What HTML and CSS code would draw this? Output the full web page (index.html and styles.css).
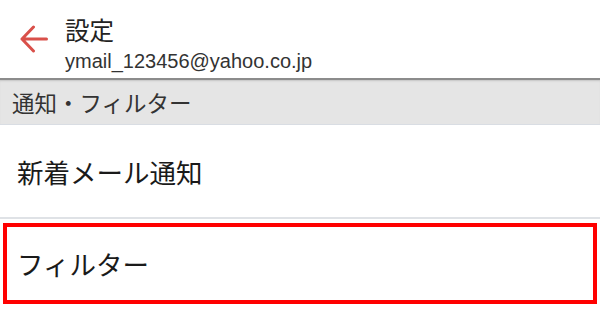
FILE: index.html
```html
<!DOCTYPE html>
<html lang="ja">
<head>
<meta charset="utf-8">
<link rel="stylesheet" href="styles.css">
</head>
<body>
<header class="header">
  <svg class="back" width="28" height="28" viewBox="0 0 28 28" aria-hidden="true">
    <path d="M2 14 H26.5 M13.5 2 L2 14 L13.5 26" fill="none" stroke="#d9504a" stroke-width="3" stroke-linecap="round" stroke-linejoin="round"/>
  </svg>
  <div class="titles">
    <div class="title">設定</div>
    <div class="email">ymail_123456@yahoo.co.jp</div>
  </div>
</header>
<div class="section">通知・フィルター</div>
<div class="row">新着メール通知</div>
<div class="row selected">フィルター</div>
</body>
</html>
```
FILE: styles.css
```css
html, body {
  margin: 0;
  padding: 0;
  background: #fff;
}
body {
  width: 600px;
  height: 312px;
  overflow: hidden;
  font-family: "Noto Sans CJK JP", "Noto Sans", sans-serif;
  color: #222;
}
.header {
  height: 78px;
  display: flex;
  align-items: flex-start;
  border-bottom: 2px solid #8c8c8c;
}
.back {
  margin: 25px 0 0 20px;
  flex: none;
}
.titles {
  margin-left: 17px;
  padding-top: 13px;
}
.title {
  font-size: 24.5px;
  line-height: 34px;
  color: #222;
}
.email {
  font-family: "Liberation Sans", Arial, sans-serif;
  font-size: 20px;
  line-height: 24px;
  margin-top: 2px;
  color: #333;
}
.section {
  height: 45px;
  box-sizing: border-box;
  padding-left: 12px;
  display: flex;
  align-items: center;
  background: #e5e5e5;
  border-bottom: 1px solid #d9dde3;
  font-size: 22.5px;
  color: #333;
  box-shadow: inset 0 2px 2px -1px #c4c4c4;
}
.row {
  display: flex;
  align-items: center;
  font-size: 26.5px;
  color: #1a1a1a;
}
.row:not(.selected) {
  height: 92px;
  padding-left: 17px;
  border-bottom: 2px solid #dfe2e6;
}
.selected {
  margin: 4px 3px 0 3px;
  height: 81px;
  box-sizing: border-box;
  border: 4px solid #ff0000;
  padding-left: 10px;
}
```
